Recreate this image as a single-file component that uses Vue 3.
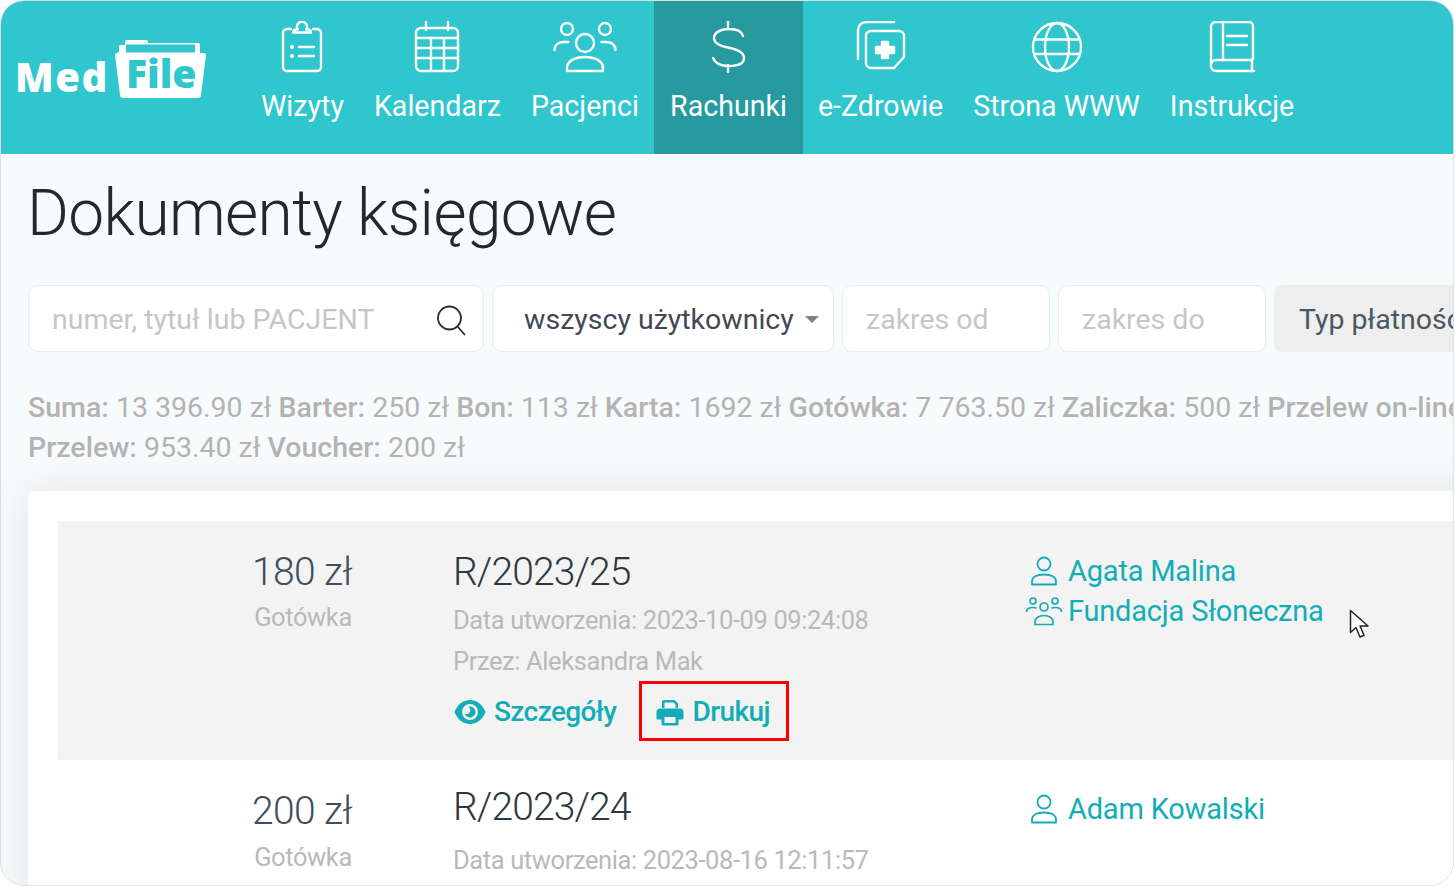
<template>
  <div class="frame">
    <header class="topbar">
      <a class="logo">
        <span class="logo-med">Med</span>
        <span class="logo-folder">
          <svg width="93" height="60" viewBox="0 0 93 60">
            <path d="M5 13V8a2 2 0 0 1 3-2h3V3a2 2 0 0 1 2-2h19a2 2 0 0 1 2 2v1h50a2 2 0 0 1 2 2v8h4a2 2 0 0 1 2 2l-5 40a3 3 0 0 1-3 3H9a3 3 0 0 1-3-3L1 16a2 2 0 0 1 2-2z" fill="#fff"/>
            <rect x="12" y="5.500" width="69" height="8" fill="#2fc6ce"/>
          </svg>
          <span class="logo-file">File</span>
        </span>
      </a>
      <nav class="nav">
        <a v-for="item in navItems" :key="item.label" class="nav-item" :class="{ active: item.active }">
          <svg :width="item.w || 52" height="52" :viewBox="`0 0 ${item.w || 52} 52`" fill="none" stroke="#fff" stroke-width="2.400" stroke-linecap="round" stroke-linejoin="round" v-html="item.icon"></svg>
          <span>{{ item.label }}</span>
        </a>
      </nav>
    </header>

    <main class="page">
      <h1>Dokumenty księgowe</h1>

      <div class="filters">
        <div class="field search">
          <span class="placeholder">numer, tytuł lub PACJENT</span>
          <svg width="32" height="32" viewBox="0 0 32 32" fill="none" stroke="#2b2f33" stroke-width="1.800" stroke-linecap="round">
            <circle cx="14.500" cy="14" r="11.500"/>
            <path d="M22.500 22.500l7 8"/>
          </svg>
        </div>
        <div class="field users">
          <span>wszyscy użytkownicy</span>
          <i class="caret"></i>
        </div>
        <div class="field range"><span class="placeholder">zakres od</span></div>
        <div class="field range"><span class="placeholder">zakres do</span></div>
        <div class="pay-type">Typ płatności</div>
      </div>

      <div class="totals">
        <span v-for="t in totals" :key="t.name"><b>{{ t.name }}:</b>{{ ' ' + t.value + ' ' }}</span>
      </div>

      <section class="card">
        <article v-for="doc in docs" :key="doc.number" class="doc" :class="{ hovered: doc.hovered }">
          <div class="amount">
            <div class="price">{{ doc.price }}</div>
            <div class="method">Gotówka</div>
          </div>
          <div class="info">
            <div class="number">{{ doc.number }}</div>
            <div class="meta">Data utworzenia: {{ doc.created }}</div>
            <div class="meta by">Przez: {{ doc.author }}</div>
            <div class="actions">
              <a class="action">
                <svg width="32" height="24" viewBox="0 0 32 24"><path fill-rule="evenodd" d="M16 0C8.500 0 3 5.500.5 12 3 18.500 8.500 24 16 24s13-5.500 15.500-12C29 5.500 23.500 0 16 0zm0 4a8 8 0 1 1 0 16 8 8 0 0 1 0-16z" fill="#12adb6"/><path d="M16 6.500a5.500 5.500 0 1 1-5.300 7 3.300 3.300 0 1 0 3.500-6.700 5.500 5.500 0 0 1 1.800-.3z" fill="#12adb6"/></svg>
                Szczegóły
              </a>
              <a class="action print">
                <svg width="28" height="28" viewBox="0 0 28 28"><path fill-rule="evenodd" d="M6 10V4a2 2 0 0 1 2-2h10.500L22 5.500V10h-2.500V6.500L17.500 4.500h-9V10zM4 10.500h20a3.500 3.500 0 0 1 3.500 3.500v6a1.500 1.500 0 0 1-1.500 1.500h-3.500V26a1.500 1.500 0 0 1-1.500 1.500H7A1.500 1.500 0 0 1 5.500 26v-4.500H2A1.500 1.500 0 0 1 .5 20v-6A3.500 3.500 0 0 1 4 10.500zM8.500 19v6h11v-6z" fill="#12adb6"/></svg>
                Drukuj
              </a>
            </div>
          </div>
          <div class="people">
            <a v-for="p in doc.people" :key="p.name" class="person">
              <span class="person-icon">
                <svg v-if="p.group" width="38" height="30" viewBox="0 0 38 30" fill="none" stroke="#12adb6" stroke-width="1.700">
                  <circle cx="8" cy="5" r="3"/><circle cx="30" cy="5" r="3"/><circle cx="19" cy="11" r="4"/>
                  <path d="M1.500 16c0-3 2.500-4.500 6.500-4.500 1.500 0 2.500.2 3.500.6M36.500 16c0-3-2.500-4.500-6.500-4.500-1.500 0-2.500.2-3.500.6"/>
                  <path d="M10 28.500v-2.500c0-4 4-6.500 9-6.500s9 2.500 9 6.500v2.500z" stroke-linejoin="round"/>
                </svg>
                <svg v-else width="28" height="30" viewBox="0 0 28 30" fill="none" stroke="#12adb6" stroke-width="1.800">
                  <circle cx="14" cy="8" r="6.500"/>
                  <path d="M2 28.500v-3c0-4.500 5-7 12-7s12 2.500 12 7v3z" stroke-linejoin="round"/>
                </svg>
              </span>
              {{ p.name }}
            </a>
          </div>
          <svg v-if="doc.hovered" class="cursor" width="22" height="30" viewBox="0 0 22 30">
            <path d="M1.500 1.500v22l5.500-5 4 9.500 4-1.800-4-9.200h8z" fill="#fff" stroke="#222" stroke-width="1.500" stroke-linejoin="round"/>
          </svg>
        </article>
      </section>
    </main>
  </div>
</template>

<script setup>
const navItems = [
  {
    label: 'Wizyty',
    icon: '<path d="M15 8h-4a4 4 0 0 0-4 4v34a4 4 0 0 0 4 4h30a4 4 0 0 0 4-4V12a4 4 0 0 0-4-4h-4"/><path d="M17 11.500h18M17 11.500a3 3 0 0 1 3-3h1.800a5 5 0 1 1 8.400 0H32a3 3 0 0 1 3 3"/><path d="M23 26h15M23 35h15"/><circle cx="16" cy="26" r=".9"/><circle cx="16" cy="35" r=".9"/>'
  },
  {
    label: 'Kalendarz',
    icon: '<rect x="5" y="7" width="42" height="43" rx="5"/><path d="M15 1v8M37 1v8M5 17h42M5 27h42M5 37h42M20 17v33M33 17v33"/>'
  },
  {
    label: 'Pacjenci',
    w: 64,
    icon: '<circle cx="14" cy="8" r="6"/><circle cx="52" cy="8" r="6"/><circle cx="32" cy="22" r="9"/><path d="M1.500 29c0-5 4-8 9-8h5M62.500 29c0-5-4-8-9-8h-5"/><path d="M14 50v-3c0-7 8-11 18-11s18 4 18 11v3z"/>'
  },
  {
    label: 'Rachunki',
    active: true,
    icon: '<path d="M26 1v7M26 44v7M41 15c-1-4-6-7-14-7-9 0-15 4-15 9s6 8 14 9.500c10 2 16 5 16 10.500s-6 8-15 8c-9 0-14-3-16-8"/>'
  },
  {
    label: 'e-Zdrowie',
    icon: '<path d="M3 38V9a8 8 0 0 1 8-8h28"/><path d="M11 15a5 5 0 0 1 5-5h28a5 5 0 0 1 5 5v21L39 47H16a5 5 0 0 1-5-5z"/><path d="M27 21h6v5h6v6h-6v5h-6v-5h-6v-6h6z" fill="#fff"/>'
  },
  {
    label: 'Strona WWW',
    icon: '<circle cx="26" cy="26" r="24"/><ellipse cx="26" cy="26" rx="12" ry="24"/><path d="M4 18.500h44M4 33h44"/>'
  },
  {
    label: 'Instrukcje',
    icon: '<path d="M5 44V6a5 5 0 0 1 5-5h33a4 4 0 0 1 4 4v32a2 2 0 0 1-2 2H10a5 5 0 0 0-5 5v1a5 5 0 0 0 5 5h38"/><path d="M46 39v11M17 1v38M21 15h20M21 24h20"/>'
  }
]

const totals = [
  { name: 'Suma', value: '13 396.90 zł' },
  { name: 'Barter', value: '250 zł' },
  { name: 'Bon', value: '113 zł' },
  { name: 'Karta', value: '1692 zł' },
  { name: 'Gotówka', value: '7 763.50 zł' },
  { name: 'Zaliczka', value: '500 zł' },
  { name: 'Przelew on-line', value: '1925 zł' },
  { name: 'Przelew', value: '953.40 zł' },
  { name: 'Voucher', value: '200 zł' }
]

const docs = [
  {
    number: 'R/2023/25',
    price: '180 zł',
    created: '2023-10-09 09:24:08',
    author: 'Aleksandra Mak',
    hovered: true,
    people: [
      { name: 'Agata Malina' },
      { name: 'Fundacja Słoneczna', group: true }
    ]
  },
  {
    number: 'R/2023/24',
    price: '200 zł',
    created: '2023-08-16 12:11:57',
    author: 'Aleksandra Mak',
    people: [{ name: 'Adam Kowalski' }]
  }
]
</script>

<style>
html, body { margin: 0; background: #fff; }
</style>

<style scoped>
* { box-sizing: border-box; }
.frame {
  width: 1454px; height: 886px; overflow: hidden; border: 1px solid #dcdfe0; border-radius: 24px;
  background: #f8fbfc; font-family: Roboto, "Noto Sans", sans-serif; color: #3b4550;
}
.topbar { height: 153px; background: #2fc6ce; display: flex; }
.logo { display: flex; align-items: flex-start; width: 245px; padding: 38px 0 0 14px; gap: 6px; }
.logo-med { font: 800 40px/1 "Open Sans", sans-serif; color: #fff; margin-top: 18px; width: 93px; letter-spacing: 1.500px; }
.logo-folder { position: relative; width: 93px; height: 60px; display: block; }
.logo-file { position: absolute; left: 12px; top: 14px; font: 800 39px/1 "Open Sans", sans-serif; color: #2fc6ce; }
.nav { display: flex; }
.nav-item {
  display: flex; flex-direction: column; align-items: center; padding: 20px 15px 0; gap: 17px;
  color: #fff; font-size: 28.600px; line-height: 32px; white-space: nowrap;
}
.nav-item.active { background: #279a9f; padding-left: 16px; padding-right: 16px; }
.page { padding: 0 0 0 27px; width: 1700px; }
h1 { margin: 0 0 0 -1px; padding-top: 25px; font-size: 64px; line-height: 70px; font-weight: 300; color: #25282b; letter-spacing: -.6px; }
.filters { display: flex; gap: 8px; margin-top: 36px; font-size: 28.500px; }
.field { height: 67px; background: #fff; border: 1px solid #e9edef; border-radius: 10px; display: flex; align-items: center; padding: 2px 23px 0; white-space: nowrap; }
.search { width: 456px; justify-content: space-between; padding-right: 16px; }
.users { width: 342px; padding-left: 31px; gap: 11px; color: #3f4a55; }
.range { width: 208px; }
.placeholder { color: #c6c6c6; }
.caret { border: 7px solid transparent; border-top-color: #7b8288; border-bottom: 0; }
.pay-type { width: 300px; height: 67px; background: #eeeeee; border-radius: 8px; display: flex; align-items: center; padding: 2px 0 0 25px; color: #4a5661; white-space: nowrap; }
.totals { margin-top: 36px; width: 1620px; font-size: 28.500px; line-height: 40px; color: #b3b3b3; }
.totals b { font-weight: 500; }
.card {
  margin-top: 23px; background: #fff; border-radius: 6px; padding-top: 30px; padding-left: 30px; height: 500px;
  box-shadow: 0 0 40px rgba(0, 30, 40, .1);
}
.doc { position: relative; display: flex; height: 239px; padding-top: 30px; padding-left: 95px; width: 1500px; border-bottom: 1px solid #f0f0f0; }
.doc.hovered { background: #f3f3f3; }
.doc + .doc { padding-top: 29px; }
.doc + .doc .price { margin-top: 0; }
.doc + .doc .number { margin-top: -4px; margin-bottom: 13px; }
.doc + .doc .method { margin-top: 6px; }
.amount { width: 300px; text-align: center; }
.price { font-size: 39px; line-height: 44px; font-weight: 300; color: #3f4d5c; letter-spacing: -.6px; padding-right: 2px; margin-top: -1px; }
.method { font-size: 25.500px; line-height: 36px; margin-top: 5px; color: #b9b9b9; letter-spacing: -.4px; }
.info { width: 571px; }
.number { font-size: 39px; line-height: 44px; font-weight: 300; color: #2d3740; letter-spacing: -.9px; margin-top: -1px; margin-bottom: 8px; }
.meta { font-size: 25.500px; line-height: 36px; margin-top: 7px; color: #b9b9b9; letter-spacing: -.4px; }
.by { margin-top: 5px; }
.actions { display: flex; margin-top: 14px; padding-left: 1px; font-weight: 500; font-size: 28px; line-height: 38px; letter-spacing: -.6px; color: #12adb6; }
.action { display: flex; align-items: center; gap: 8px; }
.action:first-child { margin-right: 22px; }
.print { border: 3px solid #f00; padding: 9px 16px 7px 14px; margin: -12px 0 -10px; gap: 9px; }
.people { display: flex; flex-direction: column; font-size: 29px; line-height: 40px; color: #12adb6; letter-spacing: -.2px; }
.person { display: flex; align-items: center; gap: 5px; }
.person-icon { width: 38px; margin-left: 1px; display: flex; justify-content: center; }
.cursor { position: absolute; left: 1291px; top: 88px; }
</style>
